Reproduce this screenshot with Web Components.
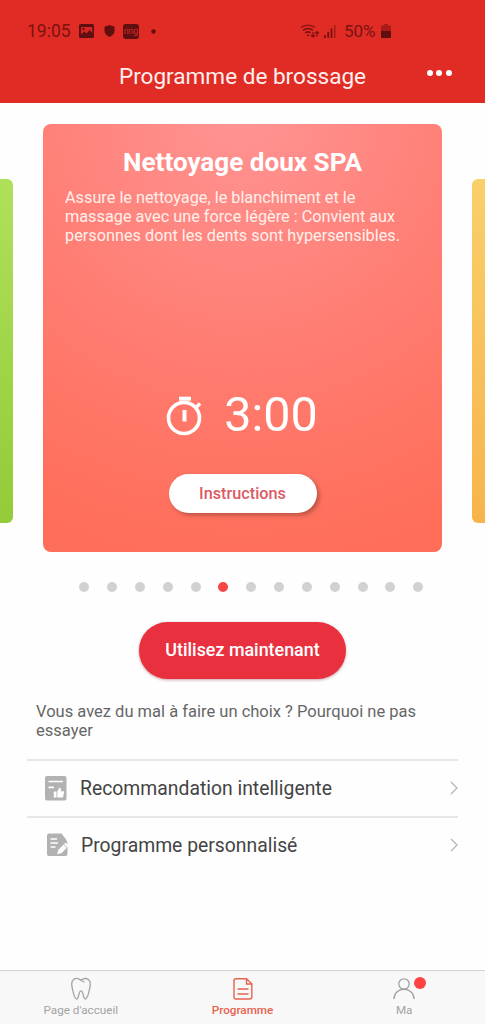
<!DOCTYPE html>
<html lang="fr">
<head>
<meta charset="utf-8">
<title>Programme de brossage</title>
<style>
html,body{margin:0;height:100%;background:#fefefe}
body{font-family:Roboto,"Liberation Sans",sans-serif;overflow:hidden}
</style>
</head>
<body>
<brush-app></brush-app>
<script>
const define=(name,html,setup)=>customElements.define(name,class extends HTMLElement{
  connectedCallback(){
    if(this.shadowRoot)return;
    const t=document.createElement('template');
    t.innerHTML=html;
    this.attachShadow({mode:'open'}).append(t.content.cloneNode(true));
    if(setup)setup(this,this.shadowRoot);
  }
});

define('status-bar',`
<style>
:host{display:flex;align-items:center;height:62px;box-sizing:border-box;padding:0 94px 0 27px;color:#7a1310;font-size:17.5px;white-space:nowrap}
.left,.right{display:flex;align-items:center}
.left{flex:1}
svg{display:block}
.ring{width:16px;height:15px;margin-left:8px;border-radius:3px;background:#5f0f10;color:#d52d28;font-size:9px;line-height:14px;text-align:center;letter-spacing:-.2px}
.time{width:44px}
.pct{margin-left:7.5px;width:33px;font-size:17px}
</style>
<div class="left">
<span class="time">19:05</span>
<svg style="margin-left:8px" width="15" height="14" viewBox="0 0 15 14"><rect width="15" height="14" rx="1.500" fill="#5f0f10"/><path d="M2 10.500 5.200 7.500 7.500 9.500 10.500 6l2.800 3V3H2Z" fill="#d52825"/><circle cx="4.500" cy="5" r="1.200" fill="#5f0f10"/></svg>
<svg style="margin-left:10px" width="11" height="12" viewBox="0 0 11 12"><path fill="#5f0f10" d="M5.500 0 10.500 1.700V6Q10.500 9.500 5.500 12 .5 9.500.5 6V1.700Z"/></svg>
<span class="ring">ring</span>
<svg style="margin-left:12px" width="5" height="5"><circle cx="2.500" cy="2.500" r="2.200" fill="#5f0f10"/></svg>
</div>
<div class="right">
<svg width="20" height="16" viewBox="0 0 20 16" fill="none" stroke="#7a1310" stroke-width="1.500"><path d="M1 4.300Q8 .2 15 4.300" opacity=".75"/><path d="M3 7.300Q8 3.600 13 7.300"/><path d="M5.300 10Q8 7.700 10.500 10"/><circle cx="8" cy="12.200" r="1" fill="#7a1310" stroke="none"/><path d="M13 9v5m-2-2 2 2 2-2M17 13.500v-5m-2 2 2-2 2 2" stroke-width="1.200"/></svg>
<svg style="margin-left:3px" width="14" height="14" viewBox="0 0 14 14" fill="#7a1310"><path d="M1 11h1.800v3H1zM4.300 8h1.800v6H4.300zM7.600 4.500h1.800V14H7.600z"/><path d="M11 1h1.500v13H11z" opacity=".6"/></svg>
<span class="pct">50%</span>
<svg style="margin-left:4px" width="10" height="16" viewBox="0 0 10 16"><path d="M3 1h4v1.500h2q1 0 1 1V8H0V3.500q0-1 1-1h2Z" fill="#a71b18"/><path d="M0 8h10v6q0 1-1 1H1q-1 0-1-1Z" fill="#5f0f10"/></svg>
</div>`);

define('title-bar',`
<style>
:host{display:grid;grid-template-columns:74px 1fr 74px;align-items:center;height:41px;color:#fff0ee}
h1{margin:0;padding-bottom:13px;font-weight:400;font-size:22.550px;line-height:30px;text-align:center;white-space:nowrap}
.menu{display:flex;gap:3.500px;justify-content:center;padding:0 0 22px 0;margin-left:-18px}
i{width:6px;height:6px;border-radius:50%;background:#fff}
</style><span></span><h1><slot></slot></h1><div class="menu"><i></i><i></i><i></i></div>`);

define('pill-button',`
<style>
:host{display:flex;align-items:center;justify-content:center;box-sizing:border-box;font-weight:500;white-space:nowrap;border-radius:99px}
:host([kind=light]){width:148px;height:38.500px;background:#fff;color:#dc5a66;font-size:16.250px;box-shadow:2.500px 2.500px 4px rgba(120,50,40,.48)}
:host([kind=primary]){width:207px;height:57px;background:#e9303f;color:#fff;font-size:17.900px;padding-bottom:1px;box-shadow:0 1px 3px rgba(120,20,30,.4)}
</style><slot></slot>`);

define('program-card',`
<style>
:host{display:flex;flex-direction:column;align-items:center;box-sizing:border-box;width:399px;height:428px;border-radius:8px;padding:21px 22px 39px;color:#fff;background:radial-gradient(circle 450px at 50% -3%,#ff9494 0%,#ff7c71 55%,#ff6e59 100%)}
h2{margin:0;font-size:26.100px;line-height:34px;font-weight:700;white-space:nowrap}
p{margin:9.500px 0 0;align-self:stretch;font-size:16.280px;line-height:19px;color:#fff0ea;white-space:nowrap}
.time{display:flex;align-items:center;gap:22px;margin-top:auto;font-size:48.500px;line-height:60px}
.time span{margin-right:1px}
svg{display:block;margin-top:1px}
pill-button{margin-top:29px}
</style>
<h2><slot name="title"></slot></h2><p><slot></slot></p>
<div class="time"><svg width="36" height="40" viewBox="0 0 36 40" fill="none" stroke="#fff"><circle cx="18" cy="22" r="15.500" stroke-width="3.600"/><path d="M13 2.700h12" stroke-width="4"/><path d="M18.500 14v11.500" stroke-width="4"/><path d="m29 12.500 5-5" stroke-width="3.600"/></svg><span><slot name="time"></slot></span></div>
<pill-button kind="light">Instructions</pill-button>`);

define('side-card',`
<style>
:host{display:block;width:13px;height:344px}
:host([tone=green]){background:linear-gradient(#afe05a,#94cb38);border-radius:0 6px 6px 0}
:host([tone=amber]){background:linear-gradient(#f9cf69,#f8b44c);border-radius:6px 0 0 6px}
</style>`);

define('page-dots',`
<style>
:host{display:flex;justify-content:space-between;width:344px}
i{width:10px;height:10px;border-radius:50%;background:#d1d1d1}
i.on{background:#f64744}
</style>`,(el,root)=>{
  for(let n=0;n<+el.getAttribute('count');n++){
    const d=document.createElement('i');
    if(n===+el.getAttribute('active'))d.className='on';
    root.append(d);
  }
});

define('list-row',`
<style>
:host{display:flex;align-items:center;box-sizing:border-box;height:57px;border-top:2px solid #e7e7e7;padding:0 0 0 17px;color:#444;font-size:19.350px;white-space:nowrap}
.t{flex:1}
.icon{display:flex;width:var(--icon-space,36px)}
svg{display:block}
</style><span class="icon"><slot name="icon"></slot></span><span class="t"><slot></slot></span>
<svg width="8" height="14" viewBox="0 0 8 14" fill="none" stroke="#b8b8b8" stroke-width="1.400"><path d="m1 1 6 6-6 6"/></svg>`);

define('tab-item',`
<style>
:host{display:flex;flex-direction:column;align-items:center;flex:1;color:#a3a3a3;font-size:11.700px;line-height:14px;padding-top:6px}
:host([active]){color:#e8604f;font-weight:500}
.icon{position:relative;height:24px;margin-bottom:2px}
.badge{display:none;position:absolute;left:21px;top:0;width:12px;height:12px;border-radius:50%;background:#ff4343}
:host([badge]) .badge{display:block}
</style><span class="icon"><slot name="icon"></slot><i class="badge"></i></span><slot></slot>`);

define('brush-app',`
<style>
:host{display:flex;flex-direction:column;height:1024px;width:485px;overflow:hidden}
header{background:#e12b25;height:103px}
.carousel{display:flex;align-items:center;justify-content:space-between;height:428px;margin-top:20.700px}
.carousel side-card{margin-top:26px}
page-dots{margin:30.800px 0 0 79.300px}
.cta{display:flex;justify-content:center;margin-top:29.500px;height:57px}
.hint{margin:23px 36px 0;font-size:16.530px;line-height:19.500px;color:#666;white-space:nowrap}
.list{margin:18px 27px 0}
.tabs{display:flex;margin-top:auto;height:53px;background:#f8f8f8;border-top:1px solid #d2d2d2}
svg{display:block}
</style>
<header><status-bar></status-bar><title-bar>Programme de brossage</title-bar></header>
<section class="carousel">
<side-card tone="green"></side-card>
<program-card><span slot="title">Nettoyage doux SPA</span>Assure le nettoyage, le blanchiment et le<br>massage avec une force légère : Convient aux<br>personnes dont les dents sont hypersensibles.<span slot="time">3:00</span></program-card>
<side-card tone="amber"></side-card>
</section>
<page-dots count="13" active="5"></page-dots>
<div class="cta"><pill-button kind="primary">Utilisez maintenant</pill-button></div>
<div class="hint">Vous avez du mal à faire un choix ? Pourquoi ne pas<br>essayer</div>
<div class="list">
<list-row><svg slot="icon" style="margin-left:1px" width="22" height="25" viewBox="0 0 22 25"><rect width="21.500" height="24.500" rx="2" fill="#b2b2b2"/><path d="M3.500 5.500h14.500M3.500 11.300h5.500" stroke="#fff" stroke-width="1.700"/><path fill="#fff" d="M8.800 15.500h2.700v6H8.800zM12.300 15.500l2.200-4q1.900.2 1.300 3.700h2.600q.8.200.7 1l-1 4.500q-.2.800-1 .8h-4.800Z"/></svg>Recommandation intelligente</list-row>
<list-row style="--icon-space:37px"><svg slot="icon" style="margin-left:3px" width="22" height="24" viewBox="0 0 22 24"><path fill="#b2b2b2" d="M2 .5h12.500l5 6.500 1 4V21q0 2-2 2H2q-2 0-2-2V2.500q0-2 2-2Z"/><path d="M3.500 6H10M3.500 10H11M3.500 14H8.500" stroke="#fff" stroke-width="1.500"/><path d="m10.200 21.200 1.200-4.500 7-7 3.600 2.800-7.300 7.400Z" fill="#fff"/><path d="m17 11.800 3 2.800" stroke="#b2b2b2" stroke-width=".9"/></svg>Programme personnalisé</list-row>
</div>
<nav class="tabs">
<tab-item><svg slot="icon" width="22" height="24" viewBox="0 0 22 24" fill="none" stroke="#a3a3a3" stroke-width="1.300" stroke-linecap="round"><path d="M11 3C8.500 1.500 6 .700 3.800 2.200.3 4.700 1.700 8.800 2.500 12c.7 3 1.600 10 4.300 10 2.300 0 1.500-8.200 4.200-8.200s1.900 8.200 4.200 8.200c2.700 0 3.600-7 4.300-10 .8-3.200 2.200-7.300-1.300-9.800C15.700.7 13.500 1.500 11 3M8.500 2l5.500 3"/></svg>Page d'accueil</tab-item>
<tab-item active><svg slot="icon" width="20" height="24" viewBox="0 0 20 24" fill="none" stroke="#e8604f" stroke-width="1.400"><path d="M3 1.800h10.500l5.300 5V20q0 2-2 2H3q-2 0-2-2V3.800q0-2 2-2ZM13.500 2v5h5M4.500 12h11M4.500 17h11"/></svg>Programme</tab-item>
<tab-item badge><svg slot="icon" width="22" height="24" viewBox="0 0 22 24" fill="none" stroke="#a0a0a0" stroke-width="1.300"><circle cx="11" cy="7" r="5.200"/><path d="M.9 22C1.200 9 20.800 9 21.100 22"/></svg>Ma</tab-item>
</nav>`);
</script>
</body>
</html>
